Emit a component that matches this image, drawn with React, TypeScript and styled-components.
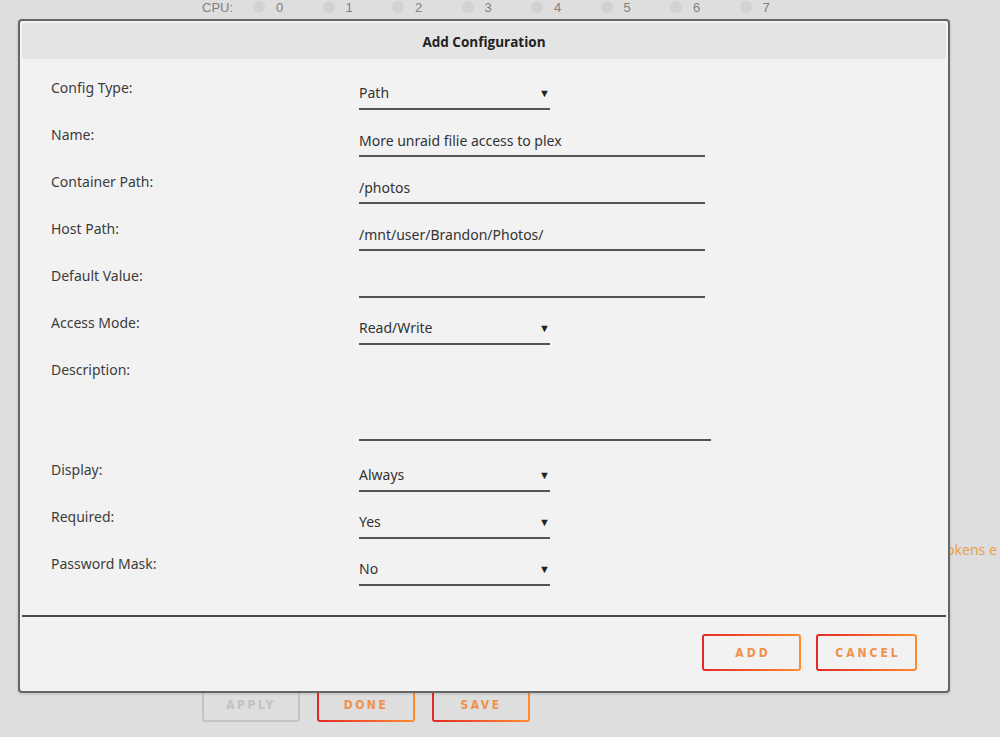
import styled, { createGlobalStyle } from "styled-components";

const GlobalStyle = createGlobalStyle`
  html, body {
    margin: 0;
    padding: 0;
    overflow: hidden;
    background: #dedede;
  }
  * {
    box-sizing: border-box;
  }
`;

const CONDENSED = `"Liberation Sans Narrow", "DejaVu Sans Condensed", "Liberation Sans", sans-serif`;

const Page = styled.div`
  position: relative;
  width: 1000px;
  height: 737px;
  display: flex;
  flex-direction: column;
  font-family: "Noto Sans", sans-serif;
`;

const CpuBar = styled.div`
  display: flex;
  align-items: center;
  height: 14px;
  padding-left: 202px;
  color: #808080;
  font-family: "Liberation Sans", sans-serif;
  font-size: 13px;
`;

const CpuLabel = styled.span`
  width: 51px;
`;

const CpuItem = styled.span`
  display: flex;
  align-items: center;
  width: 69.5px;
  gap: 11px;
`;

const CpuDot = styled.span`
  width: 12px;
  height: 12px;
  border-radius: 50%;
  background: #d2d2d2;
`;

const TokensNote = styled.div`
  margin-top: 526px;
  padding-left: 941px;
  white-space: nowrap;
  color: #e8a24a;
  font-size: 14px;
  line-height: 20px;
`;

const PageActions = styled.div`
  display: flex;
  gap: 17px;
  margin-top: 128px;
  padding-left: 202px;
`;

const ActionButton = styled.button<{ $disabled?: boolean }>`
  width: 98px;
  height: 34px;
  border-radius: 3px;
  border: 2px solid transparent;
  background: ${p =>
    p.$disabled
      ? "linear-gradient(#dedede, #dedede) padding-box, linear-gradient(#c4c4c4, #c4c4c4) border-box"
      : "linear-gradient(#dedede, #dedede) padding-box, linear-gradient(90deg, #e22828, #ff8c2f) border-box"};
  color: ${p => (p.$disabled ? "#c2c2c2" : "#f0914a")};
  font-family: ${CONDENSED};
  font-weight: bold;
  font-size: 12px;
  letter-spacing: 2.5px;
  padding: 0;
`;

const Dialog = styled.div`
  position: absolute;
  left: 18px;
  top: 19px;
  width: 932px;
  height: 674px;
  display: flex;
  flex-direction: column;
  background: #f2f2f2;
  border: 2px solid #666;
  border-radius: 4px;
  box-shadow: 0 1px 3px rgba(0, 0, 0, 0.15);
`;

const DialogHeader = styled.div`
  margin: 2px 2px 0;
  height: 36px;
  display: flex;
  align-items: center;
  justify-content: center;
  background: #e4e4e4;
  border-radius: 4px;
  color: #222;
  font-weight: bold;
  font-size: 13.5px;
  font-family: "Open Sans", "Noto Sans", sans-serif;
  padding-top: 2px;
`;

const Form = styled.div`
  display: grid;
  grid-template-columns: 308px 1fr;
  row-gap: 15px;
  padding: 19px 0 29px 31px;
`;

const Label = styled.div<{ $tall?: boolean }>`
  color: #3c3c3c;
  font-size: 14px;
  line-height: 20px;
  min-height: ${p => (p.$tall ? "85px" : "0")};
`;

const TextField = styled.input<{ $width: number }>`
  margin-top: 5px;
  width: ${p => p.$width}px;
  height: 27px;
  padding: 0 0 5px;
  border: none;
  border-bottom: 2px solid #555;
  background: transparent;
  color: #333;
  font-family: "Noto Sans", sans-serif;
  font-size: 14px;
  line-height: 20px;
  outline: none;
`;

const TextArea = styled.textarea`
  margin-top: 5px;
  width: 352px;
  height: 76px;
  padding: 0;
  border: none;
  border-bottom: 2px solid #555;
  background: transparent;
  resize: none;
  font-family: "Noto Sans", sans-serif;
  font-size: 14px;
  outline: none;
`;

const SelectBox = styled.div`
  margin-top: 5px;
  width: 191px;
  height: 27px;
  display: flex;
  justify-content: space-between;
  align-items: flex-start;
  padding-bottom: 5px;
  border-bottom: 2px solid #555;
  color: #333;
  font-size: 14px;
  line-height: 20px;
`;

const Caret = styled.span`
  font-size: 11px;
  line-height: 20px;
  color: #222;
`;

const Divider = styled.div`
  margin: 0 2px;
  height: 2px;
  background: #4a4a4a;
`;

const Footer = styled.div`
  display: flex;
  justify-content: flex-end;
  gap: 15px;
  padding: 17px 31px 0 0;
`;

const DialogButton = styled.button<{ $width: number }>`
  width: ${p => p.$width}px;
  height: 37px;
  border-radius: 3px;
  border: 2px solid transparent;
  background: linear-gradient(#f2f2f2, #f2f2f2) padding-box,
    linear-gradient(90deg, #e22828, #ff8c2f) border-box;
  color: #f0914a;
  font-family: ${CONDENSED};
  font-weight: bold;
  font-size: 12px;
  letter-spacing: 3px;
  padding: 0 0 0 3px;
`;

type Field =
  | { label: string; kind: "select"; value: string }
  | { label: string; kind: "text"; value: string; width?: number }
  | { label: string; kind: "area" };

const fields: Field[] = [
  { label: "Config Type:", kind: "select", value: "Path" },
  { label: "Name:", kind: "text", value: "More unraid filie access to plex" },
  { label: "Container Path:", kind: "text", value: "/photos" },
  { label: "Host Path:", kind: "text", value: "/mnt/user/Brandon/Photos/" },
  { label: "Default Value:", kind: "text", value: "" },
  { label: "Access Mode:", kind: "select", value: "Read/Write" },
  { label: "Description:", kind: "area" },
  { label: "Display:", kind: "select", value: "Always" },
  { label: "Required:", kind: "select", value: "Yes" },
  { label: "Password Mask:", kind: "select", value: "No" },
];

function renderControl(f: Field) {
  if (f.kind === "select") {
    return (
      <SelectBox>
        <span>{f.value}</span>
        <Caret>▼</Caret>
      </SelectBox>
    );
  }
  if (f.kind === "area") return <TextArea readOnly />;
  return <TextField $width={f.width ?? 346} value={f.value} readOnly />;
}

export default function App() {
  return (
    <Page>
      <GlobalStyle />
      <CpuBar>
        <CpuLabel>CPU:</CpuLabel>
        {[0, 1, 2, 3, 4, 5, 6, 7].map(n => (
          <CpuItem key={n}>
            <CpuDot />
            {n}
          </CpuItem>
        ))}
      </CpuBar>
      <TokensNote>tokens e</TokensNote>
      <PageActions>
        <ActionButton $disabled>APPLY</ActionButton>
        <ActionButton>DONE</ActionButton>
        <ActionButton>SAVE</ActionButton>
      </PageActions>

      <Dialog>
        <DialogHeader>Add Configuration</DialogHeader>
        <Form>
          {fields.map(f => (
            <>
              <Label key={f.label} $tall={f.kind === "area"}>
                {f.label}
              </Label>
              {renderControl(f)}
            </>
          ))}
        </Form>
        <Divider />
        <Footer>
          <DialogButton $width={99}>ADD</DialogButton>
          <DialogButton $width={101}>CANCEL</DialogButton>
        </Footer>
      </Dialog>
    </Page>
  );
}
